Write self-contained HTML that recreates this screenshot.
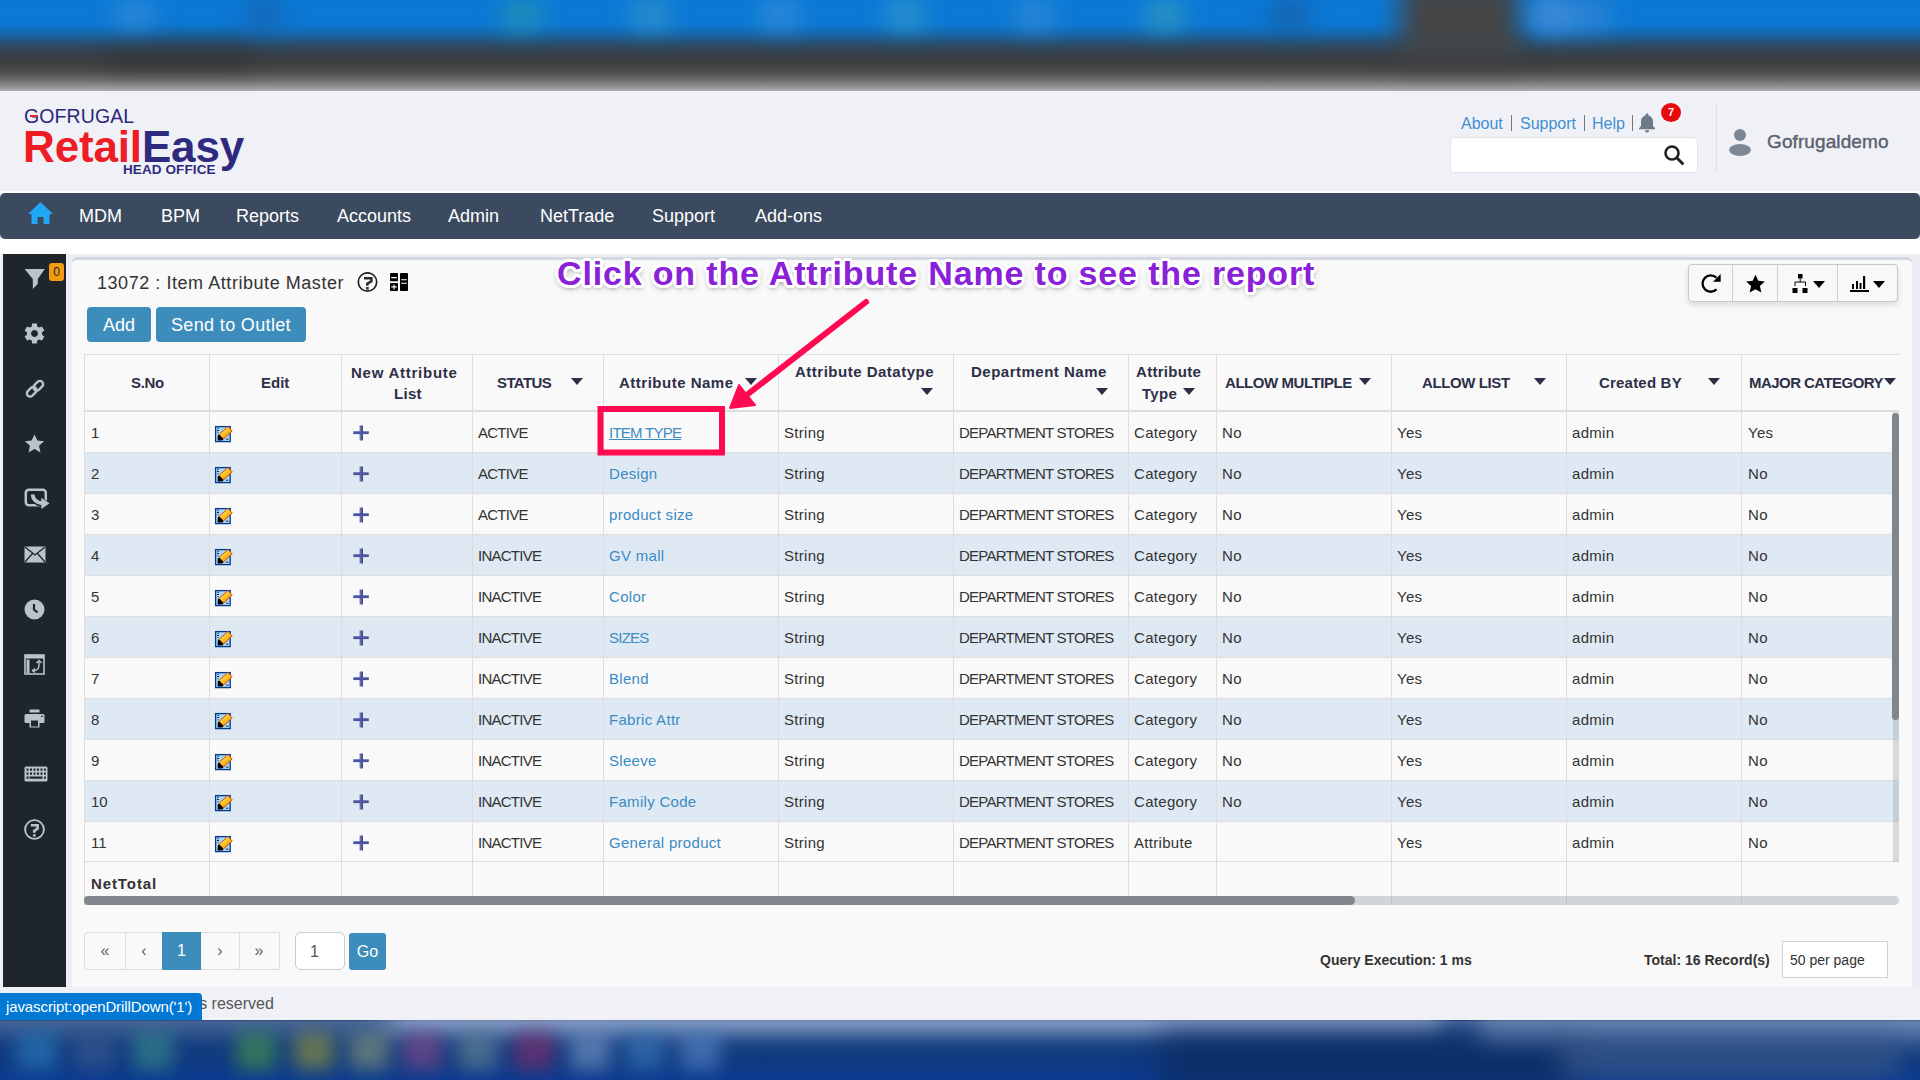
<!DOCTYPE html><html><head><meta charset="utf-8"><title>Item Attribute Master</title><style>
*{box-sizing:border-box}
html,body{margin:0;padding:0}
body{width:1920px;height:1080px;overflow:hidden;position:relative;background:#f0f1f6;font-family:"Liberation Sans",sans-serif;color:#333}
.abs{position:absolute}
#topbar{left:0;top:0;width:1920px;height:91px;overflow:hidden;background:linear-gradient(180deg,#0a79d6 0px,#0b78d4 24px,#1766a8 34px,#2a4d6c 44px,#37404a 54px,#3d3e40 62px,#4a4a4a 71px,#6c6c6c 80px,#9a9a9c 88px,#b0b0b2 91px)}
#taskbar{left:0;top:1020px;width:1920px;height:60px;overflow:hidden;background:linear-gradient(180deg,#2a3e62 0px,#4a6aa0 2px,#2f5590 10px,#173f80 24px,#0f3a80 40px,#0b3a90 60px)}
.nav{left:0;top:193px;width:1920px;height:46px;background:#3b4a5f;border-radius:5px}
.nav span{position:absolute;top:13px;color:#fff;font-size:18px;letter-spacing:0px}
#white{left:0;top:239px;width:1920px;height:15px;background:#fff}
#side{left:3px;top:254px;width:63px;height:733px;background:#1e252b}
#gapl{left:66px;top:254px;width:1854px;height:733px;background:#eceef3}
#panel{left:72px;top:257px;width:1840px;height:730px;background:#f9f9f9;border-top:3px solid #d3d8e0;border-radius:6px 6px 0 0}
#footer{left:0;top:987px;width:1920px;height:33px;background:#f0f1f6}
.btn{background:#3c8dbc;color:#fff;border-radius:4px;font-size:18px;text-align:center;line-height:37px;height:35px;top:307px;overflow:hidden}
.row{left:84px;width:1815px;height:41px;border-bottom:1px solid #dddddd}
.odd{background:#f9f9f9}.even{background:#dee9f3}
.vl{width:1px;background:#dddddd}
.td{position:absolute;font-size:15px;color:#333;white-space:nowrap;line-height:18px}
.up{letter-spacing:-0.75px}
.lo{letter-spacing:0.3px}
.th{position:absolute;font-size:15px;font-weight:bold;color:#2d2f48;white-space:nowrap;line-height:21px}
.lnk{color:#3b8bc4}
.caret{position:absolute;width:0;height:0;border-left:6px solid transparent;border-right:6px solid transparent;border-top:7px solid #2d2f48}
</style></head><body>
<svg width="0" height="0" style="position:absolute"><defs><linearGradient id="pg" x1="0" y1="0" x2="1" y2="1"><stop offset="0" stop-color="#fff7b0"/><stop offset="0.5" stop-color="#fbc21e"/><stop offset="1" stop-color="#e46a10"/></linearGradient></defs><defs><linearGradient id="plg" x1="0" y1="0" x2="1" y2="0"><stop offset="0" stop-color="#7d84c4"/><stop offset="1" stop-color="#363e7c"/></linearGradient></defs></svg>
<div id="topbar" class="abs">
<div class="abs" style="left:1400px;top:-20px;width:120px;height:80px;background:#444;filter:blur(14px)"></div>
<div class="abs" style="left:1540px;top:0;width:70px;height:30px;background:#3d8ad0;filter:blur(12px);opacity:.7"></div>
<div class="abs" style="left:113px;top:-2px;width:44px;height:34px;border-radius:50%;background:#3b8fd6;filter:blur(11px);opacity:.65"></div>
<div class="abs" style="left:243px;top:-2px;width:44px;height:34px;border-radius:50%;background:#1c5fa6;filter:blur(11px);opacity:.65"></div>
<div class="abs" style="left:500px;top:-2px;width:44px;height:34px;border-radius:50%;background:#2a9aa8;filter:blur(11px);opacity:.65"></div>
<div class="abs" style="left:628px;top:-2px;width:44px;height:34px;border-radius:50%;background:#3a98c8;filter:blur(11px);opacity:.65"></div>
<div class="abs" style="left:758px;top:-2px;width:44px;height:34px;border-radius:50%;background:#3d92d8;filter:blur(11px);opacity:.65"></div>
<div class="abs" style="left:883px;top:-2px;width:44px;height:34px;border-radius:50%;background:#3a9cc8;filter:blur(11px);opacity:.65"></div>
<div class="abs" style="left:1013px;top:-2px;width:44px;height:34px;border-radius:50%;background:#3a8fd8;filter:blur(11px);opacity:.65"></div>
<div class="abs" style="left:1143px;top:-2px;width:44px;height:34px;border-radius:50%;background:#3aa0b8;filter:blur(11px);opacity:.65"></div>
<div class="abs" style="left:1268px;top:-2px;width:44px;height:34px;border-radius:50%;background:#1a5a9a;filter:blur(11px);opacity:.65"></div>
<div class="abs" style="left:1528px;top:-2px;width:44px;height:34px;border-radius:50%;background:#4a90d8;filter:blur(11px);opacity:.65"></div>
<div class="abs" style="left:110px;top:45px;width:140px;height:25px;background:#2a2a2a;filter:blur(12px);opacity:.35"></div>
</div>
<div id="hdr" class="abs" style="left:0;top:91px;width:1920px;height:102px;background:#f0f1f6"></div>
<div class="abs" style="left:0;top:191px;width:1920px;height:2px;background:#fff"></div>
<div class="abs" style="left:24px;top:106px;font-size:19.5px;color:#2b2a7a;letter-spacing:0.1px;font-weight:normal;line-height:20px;white-space:nowrap">G<span>OFRUGAL</span></div>
<div class="abs" style="left:30px;top:115px;width:8px;height:2px;background:#e5242a"></div>
<div class="abs" style="left:23px;top:124px;font-size:44px;font-weight:bold;letter-spacing:-0.15px;line-height:46px;white-space:nowrap"><span style="color:#ee1c25">Retail</span><span style="color:#2e2a80">Easy</span></div>
<div class="abs" style="left:122px;top:162px;font-size:13.5px;font-weight:bold;color:#2e2a80;letter-spacing:0.1px;line-height:15px;background:#f0f1f6;padding:0 2px 0 1px">HEAD OFFICE</div>
<div class="abs" style="left:1461px;top:114px;font-size:16px;color:#3f8fd2;line-height:20px;white-space:nowrap">About</div>
<div class="abs" style="left:1511px;top:115px;width:1px;height:16px;background:#777"></div>
<div class="abs" style="left:1520px;top:114px;font-size:16px;color:#3f8fd2;line-height:20px">Support</div>
<div class="abs" style="left:1584px;top:115px;width:1px;height:16px;background:#777"></div>
<div class="abs" style="left:1592px;top:114px;font-size:16px;color:#3f8fd2;line-height:20px">Help</div>
<div class="abs" style="left:1632px;top:115px;width:1px;height:16px;background:#777"></div>
<svg class="abs" style="left:1637px;top:112px" width="20" height="22" viewBox="0 0 20 22"><path d="M10 1.5c-.9 0-1.5.6-1.5 1.4v.6C5.6 4.2 4 6.6 4 9.5v4.5l-2 2.2v1h16v-1l-2-2.2V9.5c0-2.9-1.6-5.3-4.5-6V2.9c0-.8-.6-1.4-1.5-1.4zM7.8 18.3c0 1.2 1 2.2 2.2 2.2s2.2-1 2.2-2.2z" fill="#6c7a89"/></svg>
<div class="abs" style="left:1661px;top:103px;width:20px;height:19px;border-radius:50%;background:#e80a0a;color:#fff;font-size:11px;font-weight:bold;text-align:center;line-height:19px">7</div>
<div class="abs" style="left:1450px;top:137px;width:248px;height:36px;background:#fff;border:1px solid #e2e4ea;border-radius:4px"></div>
<svg class="abs" style="left:1663px;top:144px" width="22" height="22" viewBox="0 0 22 22"><circle cx="9" cy="9" r="6.5" fill="none" stroke="#222" stroke-width="2.6"/><line x1="13.8" y1="13.8" x2="19.5" y2="19.5" stroke="#222" stroke-width="3" stroke-linecap="round"/></svg>
<div class="abs" style="left:1716px;top:103px;width:1px;height:70px;background:#dde0e6"></div>
<svg class="abs" style="left:1728px;top:127px" width="26" height="30" viewBox="0 0 26 30"><circle cx="12" cy="8" r="6" fill="#7d8896"/><ellipse cx="12" cy="23" rx="11" ry="6" fill="#7d8896"/></svg>
<div class="abs" style="left:1767px;top:131px;font-size:19px;color:#59616e;line-height:22px;white-space:nowrap;font-weight:normal;-webkit-text-stroke:0.4px #59616e;letter-spacing:0.1px">Gofrugaldemo</div>
<div class="abs nav">
<svg class="abs" style="left:27px;top:8px" width="27" height="24" viewBox="0 0 27 24"><path d="M13.5 1 L26 13 L22.5 13 L22.5 23 L16.5 23 L16.5 16 L10.5 16 L10.5 23 L4.5 23 L4.5 13 L1 13 Z" fill="#22a7f5"/></svg>
<span style="left:79px">MDM</span>
<span style="left:161px">BPM</span>
<span style="left:236px">Reports</span>
<span style="left:337px">Accounts</span>
<span style="left:448px">Admin</span>
<span style="left:540px">NetTrade</span>
<span style="left:652px">Support</span>
<span style="left:755px">Add-ons</span>
</div>
<div id="white" class="abs"></div>
<div id="gapl" class="abs"></div>
<div id="side" class="abs"></div>
<div id="panel" class="abs"></div>
<svg class="abs" style="left:24px;top:268px" width="22" height="22" viewBox="0 0 22 22"><path d="M0.6 1 H20.8 L13.8 11 V16 L8.8 21 V11 Z" fill="#b8c4cc"/></svg>
<div class="abs" style="left:49px;top:263px;width:15px;height:18px;background:#f39c12;border-radius:3px;color:#222;font-size:12px;text-align:center;line-height:18px">0</div>
<svg class="abs" style="left:24px;top:323px" width="21" height="21" viewBox="0 0 21 21"><path fill-rule="evenodd" fill="#b8c4cc" d="M7.78 3.40 L8.10 0.48 L12.90 0.48 L13.22 3.40 L15.28 4.59 L17.97 3.41 L20.38 7.57 L18.01 9.31 L18.01 11.69 L20.38 13.43 L17.97 17.59 L15.28 16.41 L13.22 17.60 L12.90 20.52 L8.10 20.52 L7.78 17.60 L5.72 16.41 L3.03 17.59 L0.62 13.43 L2.99 11.69 L2.99 9.31 L0.62 7.57 L3.03 3.41 L5.72 4.59 Z M10.5 7 a3.5 3.5 0 1 0 0.01 0 Z"/></svg>
<svg class="abs" style="left:24px;top:378px" width="22" height="22" viewBox="0 0 22 22"><g fill="none" stroke="#b8c4cc" stroke-width="2.4" stroke-linecap="round"><rect x="2.2" y="10.5" width="11" height="6.5" rx="3.25" transform="rotate(-45 7.7 13.75)"/><rect x="8.8" y="4.5" width="11" height="6.5" rx="3.25" transform="rotate(-45 14.3 7.75)"/></g></svg>
<svg class="abs" style="left:24px;top:434px" width="21" height="20" viewBox="0 0 24 23"><path fill="#b8c4cc" d="M12 0.5l3.3 7 7.7.8-5.8 5.2 1.7 7.7L12 17.3l-6.9 3.9 1.7-7.7L1 8.3l7.7-.8z"/></svg>
<svg class="abs" style="left:24px;top:488px" width="27" height="22" viewBox="0 0 27 22"><rect x="1.8" y="1.8" width="20" height="15.5" rx="3" fill="none" stroke="#b8c4cc" stroke-width="2.5"/><path d="M8.5 6.5 Q9.5 14.5 18.5 15.3" fill="none" stroke="#1e252b" stroke-width="6.5"/><path d="M16.3 8.8 L27 15.2 L16.3 22 Z" fill="#1e252b"/><path d="M8.5 6.5 Q9.5 14.5 18.5 15.3" fill="none" stroke="#b8c4cc" stroke-width="3.8"/><path d="M17.3 9.8 L25.6 15.2 L17.3 20.9 Z" fill="#b8c4cc"/></svg>
<svg class="abs" style="left:24px;top:546px" width="22" height="17" viewBox="0 0 22 17"><rect x="0.5" y="0.5" width="21" height="16" fill="#b8c4cc"/><path d="M1 1 L11 9 L21 1 M1 16 L8.5 7.5 M21 16 L13.5 7.5" fill="none" stroke="#1e252b" stroke-width="1.3"/></svg>
<svg class="abs" style="left:24px;top:599px" width="21" height="21" viewBox="0 0 21 21"><circle cx="10.5" cy="10.5" r="10" fill="#b8c4cc"/><path d="M10 5 V10.5 L13.5 13.5" fill="none" stroke="#1e252b" stroke-width="2.2"/></svg>
<svg class="abs" style="left:24px;top:654px" width="21" height="21" viewBox="0 0 21 21"><rect x="1" y="1" width="19" height="19" fill="none" stroke="#b8c4cc" stroke-width="1.6"/><rect x="1" y="1" width="19" height="3.5" fill="#b8c4cc"/><rect x="2.5" y="5.5" width="3" height="13.5" fill="#b8c4cc"/><path d="M8.5 16.5 H10.5 C14 16.5 15 14 15 10 V8" fill="none" stroke="#b8c4cc" stroke-width="1.4"/><path d="M12.5 9 L15 6.5 L17.5 9 M11 14.5 L8.5 16.5 L11 18.5" fill="none" stroke="#b8c4cc" stroke-width="1.4"/></svg>
<svg class="abs" style="left:24px;top:709px" width="21" height="19" viewBox="0 0 21 19"><rect x="5.5" y="0.5" width="10" height="3" fill="#b8c4cc"/><rect x="0.5" y="5" width="20" height="9" rx="1.5" fill="#b8c4cc"/><circle cx="18" cy="7.3" r="0.9" fill="#1e252b"/><rect x="5.5" y="10.5" width="10" height="8" fill="#b8c4cc"/><rect x="7" y="11.5" width="7" height="6" fill="#1e252b"/></svg>
<svg class="abs" style="left:24px;top:766px" width="24" height="16" viewBox="0 0 24 16"><rect x="0.5" y="0.5" width="23" height="15" rx="1.5" fill="#b8c4cc"/><g fill="#1e252b"><rect x="2.5" y="2.5" width="2" height="2.2"/><rect x="6" y="2.5" width="2" height="2.2"/><rect x="9.5" y="2.5" width="2" height="2.2"/><rect x="13" y="2.5" width="2" height="2.2"/><rect x="16.5" y="2.5" width="2" height="2.2"/><rect x="20" y="2.5" width="1.8" height="2.2"/><rect x="2.5" y="6.5" width="2" height="2.2"/><rect x="6" y="6.5" width="2" height="2.2"/><rect x="9.5" y="6.5" width="2" height="2.2"/><rect x="13" y="6.5" width="2" height="2.2"/><rect x="16.5" y="6.5" width="2" height="2.2"/><rect x="20" y="6.5" width="1.8" height="2.2"/><rect x="2.5" y="10.5" width="2" height="2.2"/><rect x="5.5" y="10.5" width="13" height="2.2"/><rect x="20" y="10.5" width="1.8" height="2.2"/></g></svg>
<svg class="abs" style="left:24px;top:819px" width="21" height="21" viewBox="0 0 21 21"><circle cx="10.5" cy="10.5" r="9.4" fill="none" stroke="#b8c4cc" stroke-width="1.9"/><path d="M6.8 6.2 H13.6 V9.6 L10.2 12 V13.8" fill="none" stroke="#b8c4cc" stroke-width="2.6" stroke-linejoin="miter"/><rect x="9" y="15.2" width="2.6" height="2.4" fill="#b8c4cc"/></svg>
<div class="abs" style="left:97px;top:271px;font-size:18px;color:#333;line-height:24px;white-space:nowrap;letter-spacing:0.55px">13072 : Item Attribute Master</div>
<svg class="abs" style="left:357px;top:272px" width="21" height="21" viewBox="0 0 21 21"><circle cx="10.5" cy="10" r="9.2" fill="none" stroke="#222" stroke-width="1.7"/><path d="M7 6.2 H14.4 V9.3 L10.3 11.8 V13.8" fill="none" stroke="#2a2a2a" stroke-width="2.5"/><rect x="9.1" y="15" width="2.6" height="2.6" fill="#2a2a2a"/></svg>
<svg class="abs" style="left:390px;top:273px" width="18" height="18" viewBox="0 0 18 18"><rect x="0" y="0" width="8" height="8.3" rx="0.8" fill="#000"/><rect x="10" y="0" width="8" height="18" rx="0.8" fill="#000"/><rect x="0" y="10" width="8" height="8" rx="0.8" fill="#000"/><path d="M1.3 4.6H6.7 M11.3 14.6 M11.2 6.8H16.8 M11.2 10.3H16.8 M1.3 13.9H6.7 M4 11.4V16.5" stroke="#fff" stroke-width="1.1"/></svg>
<div class="abs btn" style="left:87px;width:64px">Add</div>
<div class="abs btn" style="left:156px;width:150px;letter-spacing:0.35px">Send to Outlet</div>
<div class="abs" style="left:1688px;top:264px;width:210px;height:38px;border:1px solid #c8c8c8;border-radius:4px;background:#f8f8f8;box-shadow:0 3px 6px rgba(0,0,0,.12)"></div>
<div class="abs" style="left:1732px;top:265px;width:1px;height:36px;background:#cfcfcf"></div>
<div class="abs" style="left:1777px;top:265px;width:1px;height:36px;background:#cfcfcf"></div>
<div class="abs" style="left:1837px;top:265px;width:1px;height:36px;background:#cfcfcf"></div>
<svg class="abs" style="left:1700px;top:273px" width="22" height="21" viewBox="0 0 22 21"><path d="M16.5 16.4 A8.2 8.2 0 1 1 16.4 4.6" fill="none" stroke="#000" stroke-width="2.3"/><path d="M13 8.8 L20.7 1.0 L20.7 8.8 Z" fill="#000"/></svg>
<svg class="abs" style="left:1745px;top:274px" width="21" height="20" viewBox="0 0 24 23"><path fill="#000" d="M12 1l3.2 6.9 7.5.8-5.6 5.1 1.6 7.4L12 17.4l-6.7 3.8 1.6-7.4L1.3 8.7l7.5-.8z"/></svg>
<svg class="abs" style="left:1792px;top:274px" width="16" height="20" viewBox="0 0 16 20"><rect x="6" y="0" width="4.5" height="4.5" fill="#000"/><path d="M8.2 4.5V8 M3 12V8H13.5V12" fill="none" stroke="#000" stroke-width="1"/><rect x="0.5" y="14" width="5" height="5" fill="#000"/><rect x="10.5" y="14" width="5" height="5" fill="#000"/></svg>
<div class="abs caret" style="left:1813px;top:281px;border-left-width:6px;border-right-width:6px;border-top:7px solid #000"></div>
<svg class="abs" style="left:1850px;top:275px" width="20" height="18" viewBox="0 0 20 18"><rect x="2" y="9" width="2" height="5" fill="#000"/><rect x="6" y="6" width="2" height="8" fill="#000"/><rect x="9.5" y="8" width="2" height="6" fill="#000"/><rect x="13" y="1" width="2.2" height="13" fill="#000"/><rect x="0" y="15" width="19" height="2" fill="#000"/></svg>
<div class="abs caret" style="left:1873px;top:281px;border-top:7px solid #000"></div>
<div class="abs" style="left:84px;top:354px;width:1815px;height:57px;background:#f9f9f9;border-top:1px solid #dddddd"></div>
<div class="abs" style="left:84px;top:410px;width:1815px;height:2px;background:#dcdcdc"></div>
<div class="abs row odd" style="top:412px;height:41px"></div>
<div class="abs row even" style="top:453px;height:41px"></div>
<div class="abs row odd" style="top:494px;height:41px"></div>
<div class="abs row even" style="top:535px;height:41px"></div>
<div class="abs row odd" style="top:576px;height:41px"></div>
<div class="abs row even" style="top:617px;height:41px"></div>
<div class="abs row odd" style="top:658px;height:41px"></div>
<div class="abs row even" style="top:699px;height:41px"></div>
<div class="abs row odd" style="top:740px;height:41px"></div>
<div class="abs row even" style="top:781px;height:41px"></div>
<div class="abs row odd" style="top:822px;height:40px"></div>
<div class="abs" style="left:84px;top:862px;width:1815px;height:43px;background:#f9f9f9"></div>
<div class="abs vl" style="left:84px;top:354px;height:551px"></div>
<div class="abs vl" style="left:209px;top:354px;height:551px"></div>
<div class="abs vl" style="left:341px;top:354px;height:551px"></div>
<div class="abs vl" style="left:472px;top:354px;height:551px"></div>
<div class="abs vl" style="left:603px;top:354px;height:551px"></div>
<div class="abs vl" style="left:778px;top:354px;height:551px"></div>
<div class="abs vl" style="left:953px;top:354px;height:551px"></div>
<div class="abs vl" style="left:1128px;top:354px;height:551px"></div>
<div class="abs vl" style="left:1216px;top:354px;height:551px"></div>
<div class="abs vl" style="left:1391px;top:354px;height:551px"></div>
<div class="abs vl" style="left:1566px;top:354px;height:551px"></div>
<div class="abs vl" style="left:1741px;top:354px;height:551px"></div>
<div class="th" style="left:131px;top:372px;letter-spacing:-0.3px">S.No</div>
<div class="th" style="left:261px;top:372px;">Edit</div>
<div class="th" style="left:351px;top:362px;letter-spacing:0.75px">New Attribute</div>
<div class="th" style="left:394px;top:383px;letter-spacing:0.3px">List</div>
<div class="th" style="left:497px;top:372px;letter-spacing:-0.6px">STATUS</div>
<div class="caret" style="left:571px;top:378px"></div>
<div class="th" style="left:619px;top:372px;letter-spacing:0.5px">Attribute Name</div>
<div class="caret" style="left:745px;top:378px"></div>
<div class="th" style="left:795px;top:361px;letter-spacing:0.5px">Attribute Datatype</div>
<div class="caret" style="left:921px;top:388px"></div>
<div class="th" style="left:971px;top:361px;letter-spacing:0.5px">Department Name</div>
<div class="caret" style="left:1096px;top:388px"></div>
<div class="th" style="left:1136px;top:361px;letter-spacing:0.3px">Attribute</div>
<div class="th" style="left:1142px;top:383px;letter-spacing:0.3px">Type</div>
<div class="caret" style="left:1183px;top:388px"></div>
<div class="th" style="left:1225px;top:372px;letter-spacing:-0.45px">ALLOW MULTIPLE</div>
<div class="caret" style="left:1359px;top:378px"></div>
<div class="th" style="left:1422px;top:372px;letter-spacing:-0.4px">ALLOW LIST</div>
<div class="caret" style="left:1534px;top:378px"></div>
<div class="th" style="left:1599px;top:372px;letter-spacing:0.2px">Created BY</div>
<div class="caret" style="left:1708px;top:378px"></div>
<div class="th" style="left:1749px;top:372px;letter-spacing:-0.55px">MAJOR CATEGORY</div>
<div class="caret" style="left:1884px;top:378px"></div>
<div class="td" style="left:91px;top:424px">1</div>
<div class="abs" style="left:214px;top:425px;width:19px;height:18px"><svg width="19" height="18" viewBox="0 0 19 18"><rect x="1.6" y="1.6" width="14.6" height="15" fill="#a9d6f5" stroke="#013a8c" stroke-width="1.3"/><path d="M3.5 3.3h1.5M3 5.5h2M3.5 7.8h1" stroke="#123" stroke-width="1.1"/><path d="M5 9.4 L13.9 1.6 L18.2 5.9 L9.5 14 Z" fill="url(#pg)" stroke="#d24a12" stroke-width="1"/><path d="M3.6 15.6 L3.8 10.6 L5 9.4 L9.5 14 L8.4 15.4 Z" fill="#000"/><rect x="12" y="13.5" width="2.5" height="1.5" fill="#4a6a8a"/></svg></div>
<div class="abs" style="left:353px;top:425px;width:17px;height:17px"><svg width="17" height="17" viewBox="0 0 17 17"><rect x="6.5" y="0.5" width="3.5" height="15" fill="url(#plg)"/><rect x="0.3" y="6.3" width="15.5" height="2.8" fill="#4c54a0"/></svg></div>
<div class="td up" style="left:478px;top:424px">ACTIVE</div>
<div class="td lnk up" style="left:609px;top:424px;text-decoration:underline">ITEM TYPE</div>
<div class="td lo" style="left:784px;top:424px">String</div>
<div class="td up" style="left:959px;top:424px">DEPARTMENT STORES</div>
<div class="td lo" style="left:1134px;top:424px">Category</div>
<div class="td lo" style="left:1222px;top:424px">No</div>
<div class="td lo" style="left:1397px;top:424px">Yes</div>
<div class="td lo" style="left:1572px;top:424px">admin</div>
<div class="td lo" style="left:1748px;top:424px">Yes</div>
<div class="td" style="left:91px;top:465px">2</div>
<div class="abs" style="left:214px;top:466px;width:19px;height:18px"><svg width="19" height="18" viewBox="0 0 19 18"><rect x="1.6" y="1.6" width="14.6" height="15" fill="#a9d6f5" stroke="#013a8c" stroke-width="1.3"/><path d="M3.5 3.3h1.5M3 5.5h2M3.5 7.8h1" stroke="#123" stroke-width="1.1"/><path d="M5 9.4 L13.9 1.6 L18.2 5.9 L9.5 14 Z" fill="url(#pg)" stroke="#d24a12" stroke-width="1"/><path d="M3.6 15.6 L3.8 10.6 L5 9.4 L9.5 14 L8.4 15.4 Z" fill="#000"/><rect x="12" y="13.5" width="2.5" height="1.5" fill="#4a6a8a"/></svg></div>
<div class="abs" style="left:353px;top:466px;width:17px;height:17px"><svg width="17" height="17" viewBox="0 0 17 17"><rect x="6.5" y="0.5" width="3.5" height="15" fill="url(#plg)"/><rect x="0.3" y="6.3" width="15.5" height="2.8" fill="#4c54a0"/></svg></div>
<div class="td up" style="left:478px;top:465px">ACTIVE</div>
<div class="td lnk lo" style="left:609px;top:465px">Design</div>
<div class="td lo" style="left:784px;top:465px">String</div>
<div class="td up" style="left:959px;top:465px">DEPARTMENT STORES</div>
<div class="td lo" style="left:1134px;top:465px">Category</div>
<div class="td lo" style="left:1222px;top:465px">No</div>
<div class="td lo" style="left:1397px;top:465px">Yes</div>
<div class="td lo" style="left:1572px;top:465px">admin</div>
<div class="td lo" style="left:1748px;top:465px">No</div>
<div class="td" style="left:91px;top:506px">3</div>
<div class="abs" style="left:214px;top:507px;width:19px;height:18px"><svg width="19" height="18" viewBox="0 0 19 18"><rect x="1.6" y="1.6" width="14.6" height="15" fill="#a9d6f5" stroke="#013a8c" stroke-width="1.3"/><path d="M3.5 3.3h1.5M3 5.5h2M3.5 7.8h1" stroke="#123" stroke-width="1.1"/><path d="M5 9.4 L13.9 1.6 L18.2 5.9 L9.5 14 Z" fill="url(#pg)" stroke="#d24a12" stroke-width="1"/><path d="M3.6 15.6 L3.8 10.6 L5 9.4 L9.5 14 L8.4 15.4 Z" fill="#000"/><rect x="12" y="13.5" width="2.5" height="1.5" fill="#4a6a8a"/></svg></div>
<div class="abs" style="left:353px;top:507px;width:17px;height:17px"><svg width="17" height="17" viewBox="0 0 17 17"><rect x="6.5" y="0.5" width="3.5" height="15" fill="url(#plg)"/><rect x="0.3" y="6.3" width="15.5" height="2.8" fill="#4c54a0"/></svg></div>
<div class="td up" style="left:478px;top:506px">ACTIVE</div>
<div class="td lnk lo" style="left:609px;top:506px">product size</div>
<div class="td lo" style="left:784px;top:506px">String</div>
<div class="td up" style="left:959px;top:506px">DEPARTMENT STORES</div>
<div class="td lo" style="left:1134px;top:506px">Category</div>
<div class="td lo" style="left:1222px;top:506px">No</div>
<div class="td lo" style="left:1397px;top:506px">Yes</div>
<div class="td lo" style="left:1572px;top:506px">admin</div>
<div class="td lo" style="left:1748px;top:506px">No</div>
<div class="td" style="left:91px;top:547px">4</div>
<div class="abs" style="left:214px;top:548px;width:19px;height:18px"><svg width="19" height="18" viewBox="0 0 19 18"><rect x="1.6" y="1.6" width="14.6" height="15" fill="#a9d6f5" stroke="#013a8c" stroke-width="1.3"/><path d="M3.5 3.3h1.5M3 5.5h2M3.5 7.8h1" stroke="#123" stroke-width="1.1"/><path d="M5 9.4 L13.9 1.6 L18.2 5.9 L9.5 14 Z" fill="url(#pg)" stroke="#d24a12" stroke-width="1"/><path d="M3.6 15.6 L3.8 10.6 L5 9.4 L9.5 14 L8.4 15.4 Z" fill="#000"/><rect x="12" y="13.5" width="2.5" height="1.5" fill="#4a6a8a"/></svg></div>
<div class="abs" style="left:353px;top:548px;width:17px;height:17px"><svg width="17" height="17" viewBox="0 0 17 17"><rect x="6.5" y="0.5" width="3.5" height="15" fill="url(#plg)"/><rect x="0.3" y="6.3" width="15.5" height="2.8" fill="#4c54a0"/></svg></div>
<div class="td up" style="left:478px;top:547px">INACTIVE</div>
<div class="td lnk lo" style="left:609px;top:547px">GV mall</div>
<div class="td lo" style="left:784px;top:547px">String</div>
<div class="td up" style="left:959px;top:547px">DEPARTMENT STORES</div>
<div class="td lo" style="left:1134px;top:547px">Category</div>
<div class="td lo" style="left:1222px;top:547px">No</div>
<div class="td lo" style="left:1397px;top:547px">Yes</div>
<div class="td lo" style="left:1572px;top:547px">admin</div>
<div class="td lo" style="left:1748px;top:547px">No</div>
<div class="td" style="left:91px;top:588px">5</div>
<div class="abs" style="left:214px;top:589px;width:19px;height:18px"><svg width="19" height="18" viewBox="0 0 19 18"><rect x="1.6" y="1.6" width="14.6" height="15" fill="#a9d6f5" stroke="#013a8c" stroke-width="1.3"/><path d="M3.5 3.3h1.5M3 5.5h2M3.5 7.8h1" stroke="#123" stroke-width="1.1"/><path d="M5 9.4 L13.9 1.6 L18.2 5.9 L9.5 14 Z" fill="url(#pg)" stroke="#d24a12" stroke-width="1"/><path d="M3.6 15.6 L3.8 10.6 L5 9.4 L9.5 14 L8.4 15.4 Z" fill="#000"/><rect x="12" y="13.5" width="2.5" height="1.5" fill="#4a6a8a"/></svg></div>
<div class="abs" style="left:353px;top:589px;width:17px;height:17px"><svg width="17" height="17" viewBox="0 0 17 17"><rect x="6.5" y="0.5" width="3.5" height="15" fill="url(#plg)"/><rect x="0.3" y="6.3" width="15.5" height="2.8" fill="#4c54a0"/></svg></div>
<div class="td up" style="left:478px;top:588px">INACTIVE</div>
<div class="td lnk lo" style="left:609px;top:588px">Color</div>
<div class="td lo" style="left:784px;top:588px">String</div>
<div class="td up" style="left:959px;top:588px">DEPARTMENT STORES</div>
<div class="td lo" style="left:1134px;top:588px">Category</div>
<div class="td lo" style="left:1222px;top:588px">No</div>
<div class="td lo" style="left:1397px;top:588px">Yes</div>
<div class="td lo" style="left:1572px;top:588px">admin</div>
<div class="td lo" style="left:1748px;top:588px">No</div>
<div class="td" style="left:91px;top:629px">6</div>
<div class="abs" style="left:214px;top:630px;width:19px;height:18px"><svg width="19" height="18" viewBox="0 0 19 18"><rect x="1.6" y="1.6" width="14.6" height="15" fill="#a9d6f5" stroke="#013a8c" stroke-width="1.3"/><path d="M3.5 3.3h1.5M3 5.5h2M3.5 7.8h1" stroke="#123" stroke-width="1.1"/><path d="M5 9.4 L13.9 1.6 L18.2 5.9 L9.5 14 Z" fill="url(#pg)" stroke="#d24a12" stroke-width="1"/><path d="M3.6 15.6 L3.8 10.6 L5 9.4 L9.5 14 L8.4 15.4 Z" fill="#000"/><rect x="12" y="13.5" width="2.5" height="1.5" fill="#4a6a8a"/></svg></div>
<div class="abs" style="left:353px;top:630px;width:17px;height:17px"><svg width="17" height="17" viewBox="0 0 17 17"><rect x="6.5" y="0.5" width="3.5" height="15" fill="url(#plg)"/><rect x="0.3" y="6.3" width="15.5" height="2.8" fill="#4c54a0"/></svg></div>
<div class="td up" style="left:478px;top:629px">INACTIVE</div>
<div class="td lnk up" style="left:609px;top:629px">SIZES</div>
<div class="td lo" style="left:784px;top:629px">String</div>
<div class="td up" style="left:959px;top:629px">DEPARTMENT STORES</div>
<div class="td lo" style="left:1134px;top:629px">Category</div>
<div class="td lo" style="left:1222px;top:629px">No</div>
<div class="td lo" style="left:1397px;top:629px">Yes</div>
<div class="td lo" style="left:1572px;top:629px">admin</div>
<div class="td lo" style="left:1748px;top:629px">No</div>
<div class="td" style="left:91px;top:670px">7</div>
<div class="abs" style="left:214px;top:671px;width:19px;height:18px"><svg width="19" height="18" viewBox="0 0 19 18"><rect x="1.6" y="1.6" width="14.6" height="15" fill="#a9d6f5" stroke="#013a8c" stroke-width="1.3"/><path d="M3.5 3.3h1.5M3 5.5h2M3.5 7.8h1" stroke="#123" stroke-width="1.1"/><path d="M5 9.4 L13.9 1.6 L18.2 5.9 L9.5 14 Z" fill="url(#pg)" stroke="#d24a12" stroke-width="1"/><path d="M3.6 15.6 L3.8 10.6 L5 9.4 L9.5 14 L8.4 15.4 Z" fill="#000"/><rect x="12" y="13.5" width="2.5" height="1.5" fill="#4a6a8a"/></svg></div>
<div class="abs" style="left:353px;top:671px;width:17px;height:17px"><svg width="17" height="17" viewBox="0 0 17 17"><rect x="6.5" y="0.5" width="3.5" height="15" fill="url(#plg)"/><rect x="0.3" y="6.3" width="15.5" height="2.8" fill="#4c54a0"/></svg></div>
<div class="td up" style="left:478px;top:670px">INACTIVE</div>
<div class="td lnk lo" style="left:609px;top:670px">Blend</div>
<div class="td lo" style="left:784px;top:670px">String</div>
<div class="td up" style="left:959px;top:670px">DEPARTMENT STORES</div>
<div class="td lo" style="left:1134px;top:670px">Category</div>
<div class="td lo" style="left:1222px;top:670px">No</div>
<div class="td lo" style="left:1397px;top:670px">Yes</div>
<div class="td lo" style="left:1572px;top:670px">admin</div>
<div class="td lo" style="left:1748px;top:670px">No</div>
<div class="td" style="left:91px;top:711px">8</div>
<div class="abs" style="left:214px;top:712px;width:19px;height:18px"><svg width="19" height="18" viewBox="0 0 19 18"><rect x="1.6" y="1.6" width="14.6" height="15" fill="#a9d6f5" stroke="#013a8c" stroke-width="1.3"/><path d="M3.5 3.3h1.5M3 5.5h2M3.5 7.8h1" stroke="#123" stroke-width="1.1"/><path d="M5 9.4 L13.9 1.6 L18.2 5.9 L9.5 14 Z" fill="url(#pg)" stroke="#d24a12" stroke-width="1"/><path d="M3.6 15.6 L3.8 10.6 L5 9.4 L9.5 14 L8.4 15.4 Z" fill="#000"/><rect x="12" y="13.5" width="2.5" height="1.5" fill="#4a6a8a"/></svg></div>
<div class="abs" style="left:353px;top:712px;width:17px;height:17px"><svg width="17" height="17" viewBox="0 0 17 17"><rect x="6.5" y="0.5" width="3.5" height="15" fill="url(#plg)"/><rect x="0.3" y="6.3" width="15.5" height="2.8" fill="#4c54a0"/></svg></div>
<div class="td up" style="left:478px;top:711px">INACTIVE</div>
<div class="td lnk lo" style="left:609px;top:711px">Fabric Attr</div>
<div class="td lo" style="left:784px;top:711px">String</div>
<div class="td up" style="left:959px;top:711px">DEPARTMENT STORES</div>
<div class="td lo" style="left:1134px;top:711px">Category</div>
<div class="td lo" style="left:1222px;top:711px">No</div>
<div class="td lo" style="left:1397px;top:711px">Yes</div>
<div class="td lo" style="left:1572px;top:711px">admin</div>
<div class="td lo" style="left:1748px;top:711px">No</div>
<div class="td" style="left:91px;top:752px">9</div>
<div class="abs" style="left:214px;top:753px;width:19px;height:18px"><svg width="19" height="18" viewBox="0 0 19 18"><rect x="1.6" y="1.6" width="14.6" height="15" fill="#a9d6f5" stroke="#013a8c" stroke-width="1.3"/><path d="M3.5 3.3h1.5M3 5.5h2M3.5 7.8h1" stroke="#123" stroke-width="1.1"/><path d="M5 9.4 L13.9 1.6 L18.2 5.9 L9.5 14 Z" fill="url(#pg)" stroke="#d24a12" stroke-width="1"/><path d="M3.6 15.6 L3.8 10.6 L5 9.4 L9.5 14 L8.4 15.4 Z" fill="#000"/><rect x="12" y="13.5" width="2.5" height="1.5" fill="#4a6a8a"/></svg></div>
<div class="abs" style="left:353px;top:753px;width:17px;height:17px"><svg width="17" height="17" viewBox="0 0 17 17"><rect x="6.5" y="0.5" width="3.5" height="15" fill="url(#plg)"/><rect x="0.3" y="6.3" width="15.5" height="2.8" fill="#4c54a0"/></svg></div>
<div class="td up" style="left:478px;top:752px">INACTIVE</div>
<div class="td lnk lo" style="left:609px;top:752px">Sleeve</div>
<div class="td lo" style="left:784px;top:752px">String</div>
<div class="td up" style="left:959px;top:752px">DEPARTMENT STORES</div>
<div class="td lo" style="left:1134px;top:752px">Category</div>
<div class="td lo" style="left:1222px;top:752px">No</div>
<div class="td lo" style="left:1397px;top:752px">Yes</div>
<div class="td lo" style="left:1572px;top:752px">admin</div>
<div class="td lo" style="left:1748px;top:752px">No</div>
<div class="td" style="left:91px;top:793px">10</div>
<div class="abs" style="left:214px;top:794px;width:19px;height:18px"><svg width="19" height="18" viewBox="0 0 19 18"><rect x="1.6" y="1.6" width="14.6" height="15" fill="#a9d6f5" stroke="#013a8c" stroke-width="1.3"/><path d="M3.5 3.3h1.5M3 5.5h2M3.5 7.8h1" stroke="#123" stroke-width="1.1"/><path d="M5 9.4 L13.9 1.6 L18.2 5.9 L9.5 14 Z" fill="url(#pg)" stroke="#d24a12" stroke-width="1"/><path d="M3.6 15.6 L3.8 10.6 L5 9.4 L9.5 14 L8.4 15.4 Z" fill="#000"/><rect x="12" y="13.5" width="2.5" height="1.5" fill="#4a6a8a"/></svg></div>
<div class="abs" style="left:353px;top:794px;width:17px;height:17px"><svg width="17" height="17" viewBox="0 0 17 17"><rect x="6.5" y="0.5" width="3.5" height="15" fill="url(#plg)"/><rect x="0.3" y="6.3" width="15.5" height="2.8" fill="#4c54a0"/></svg></div>
<div class="td up" style="left:478px;top:793px">INACTIVE</div>
<div class="td lnk lo" style="left:609px;top:793px">Family Code</div>
<div class="td lo" style="left:784px;top:793px">String</div>
<div class="td up" style="left:959px;top:793px">DEPARTMENT STORES</div>
<div class="td lo" style="left:1134px;top:793px">Category</div>
<div class="td lo" style="left:1222px;top:793px">No</div>
<div class="td lo" style="left:1397px;top:793px">Yes</div>
<div class="td lo" style="left:1572px;top:793px">admin</div>
<div class="td lo" style="left:1748px;top:793px">No</div>
<div class="td" style="left:91px;top:834px">11</div>
<div class="abs" style="left:214px;top:835px;width:19px;height:18px"><svg width="19" height="18" viewBox="0 0 19 18"><rect x="1.6" y="1.6" width="14.6" height="15" fill="#a9d6f5" stroke="#013a8c" stroke-width="1.3"/><path d="M3.5 3.3h1.5M3 5.5h2M3.5 7.8h1" stroke="#123" stroke-width="1.1"/><path d="M5 9.4 L13.9 1.6 L18.2 5.9 L9.5 14 Z" fill="url(#pg)" stroke="#d24a12" stroke-width="1"/><path d="M3.6 15.6 L3.8 10.6 L5 9.4 L9.5 14 L8.4 15.4 Z" fill="#000"/><rect x="12" y="13.5" width="2.5" height="1.5" fill="#4a6a8a"/></svg></div>
<div class="abs" style="left:353px;top:835px;width:17px;height:17px"><svg width="17" height="17" viewBox="0 0 17 17"><rect x="6.5" y="0.5" width="3.5" height="15" fill="url(#plg)"/><rect x="0.3" y="6.3" width="15.5" height="2.8" fill="#4c54a0"/></svg></div>
<div class="td up" style="left:478px;top:834px">INACTIVE</div>
<div class="td lnk lo" style="left:609px;top:834px">General product</div>
<div class="td lo" style="left:784px;top:834px">String</div>
<div class="td up" style="left:959px;top:834px">DEPARTMENT STORES</div>
<div class="td lo" style="left:1134px;top:834px">Attribute</div>
<div class="td lo" style="left:1397px;top:834px">Yes</div>
<div class="td lo" style="left:1572px;top:834px">admin</div>
<div class="td lo" style="left:1748px;top:834px">No</div>
<div class="th" style="left:91px;top:873px;color:#333;letter-spacing:0.9px">NetTotal</div>
<div class="abs" style="left:1893px;top:412px;width:6px;height:450px;background:rgba(150,160,170,.35)"></div>
<div class="abs" style="left:1892px;top:413px;width:7px;height:307px;border-radius:4px;background:#80868b"></div>
<div class="abs" style="left:84px;top:896px;width:1815px;height:9px;background:rgba(150,160,170,.4);border-radius:0 5px 5px 0"></div>
<div class="abs" style="left:84px;top:896px;width:1271px;height:9px;border-radius:5px;background:#80868b"></div>
<div class="abs" style="left:84px;top:932px;width:196px;height:38px;border:1px solid #dcdcdc;border-radius:4px 0 0 4px;background:#f9f9f9"></div>
<div class="abs" style="left:125px;top:932px;width:1px;height:38px;background:#dcdcdc"></div>
<div class="abs" style="left:239px;top:932px;width:1px;height:38px;background:#dcdcdc"></div>
<div class="abs" style="left:162px;top:932px;width:39px;height:38px;background:#3c8dbc"></div>
<div class="abs" style="left:85px;top:940px;width:40px;text-align:center;font-size:16px;color:#6b6055;line-height:22px">&laquo;</div>
<div class="abs" style="left:124px;top:940px;width:40px;text-align:center;font-size:16px;color:#6b6055;line-height:22px">&lsaquo;</div>
<div class="abs" style="left:161.5px;top:940px;width:40px;text-align:center;font-size:16px;color:#fff;line-height:22px">1</div>
<div class="abs" style="left:200px;top:940px;width:40px;text-align:center;font-size:16px;color:#6b6055;line-height:22px">&rsaquo;</div>
<div class="abs" style="left:239px;top:940px;width:40px;text-align:center;font-size:16px;color:#6b6055;line-height:22px">&raquo;</div>
<div class="abs" style="left:295px;top:932px;width:50px;height:38px;border:1px solid #ccc;border-radius:6px;background:#fff;font-size:16px;color:#555;line-height:38px;padding-left:14px">1</div>
<div class="abs" style="left:349px;top:933px;width:37px;height:37px;border-radius:3px;background:#3c8dbc;color:#fff;font-size:16px;text-align:center;line-height:37px">Go</div>
<div class="abs" style="left:1320px;top:952px;font-size:14px;font-weight:bold;color:#333;white-space:nowrap;line-height:17px;letter-spacing:0px">Query Execution: 1 ms</div>
<div class="abs" style="left:1644px;top:952px;font-size:14px;font-weight:bold;color:#333;white-space:nowrap;line-height:17px">Total: 16 Record(s)</div>
<div class="abs" style="left:1782px;top:941px;width:106px;height:37px;border:1px solid #d4d4d4;background:#fff;font-size:14px;color:#333;line-height:37px;padding-left:7px;white-space:nowrap">50 per page</div>
<div id="footer" class="abs"></div>
<div class="abs" style="left:168px;top:994px;font-size:16px;color:#555;line-height:20px;white-space:nowrap">rights reserved</div>
<div class="abs" style="left:0;top:993px;width:202px;height:27px;background:#0078d4;border-radius:0 4px 0 0;color:#fff;font-size:15px;line-height:27px;padding-left:6px;white-space:nowrap;letter-spacing:-0.1px">javascript:openDrillDown('1')</div>
<div id="taskbar" class="abs">
<div class="abs" style="left:380px;top:-14px;width:1060px;height:26px;background:#9db0d4;filter:blur(10px);opacity:.75"></div>
<div class="abs" style="left:-40px;top:-14px;width:440px;height:24px;background:#3c5a8c;filter:blur(10px);opacity:.6"></div>
<div class="abs" style="left:1160px;top:14px;width:420px;height:60px;background:#0c2c62;filter:blur(16px);opacity:.8"></div>
<div class="abs" style="left:1480px;top:-10px;width:460px;height:30px;background:#8aa0c8;filter:blur(12px);opacity:.55"></div>
<div class="abs" style="left:1560px;top:18px;width:340px;height:40px;background:#3c5a88;filter:blur(14px);opacity:.7"></div>
<div class="abs" style="left:17px;top:12px;width:40px;height:38px;background:#2a7fc0;filter:blur(9px);opacity:.6"></div>
<div class="abs" style="left:74px;top:12px;width:40px;height:38px;background:#3a5a90;filter:blur(9px);opacity:.6"></div>
<div class="abs" style="left:133px;top:12px;width:40px;height:38px;background:#3a9090;filter:blur(9px);opacity:.6"></div>
<div class="abs" style="left:236px;top:12px;width:40px;height:38px;background:#4a9a4a;filter:blur(9px);opacity:.6"></div>
<div class="abs" style="left:294px;top:12px;width:40px;height:38px;background:#9a9a3a;filter:blur(9px);opacity:.6"></div>
<div class="abs" style="left:349px;top:12px;width:40px;height:38px;background:#8a9a7a;filter:blur(9px);opacity:.6"></div>
<div class="abs" style="left:402px;top:12px;width:40px;height:38px;background:#8a4a8a;filter:blur(9px);opacity:.6"></div>
<div class="abs" style="left:458px;top:12px;width:40px;height:38px;background:#6a8a9a;filter:blur(9px);opacity:.6"></div>
<div class="abs" style="left:514px;top:12px;width:40px;height:38px;background:#8a2a6a;filter:blur(9px);opacity:.6"></div>
<div class="abs" style="left:570px;top:12px;width:40px;height:38px;background:#7a9aca;filter:blur(9px);opacity:.6"></div>
<div class="abs" style="left:625px;top:12px;width:40px;height:38px;background:#3a7aba;filter:blur(9px);opacity:.6"></div>
<div class="abs" style="left:680px;top:12px;width:40px;height:38px;background:#5a8aca;filter:blur(9px);opacity:.6"></div>
</div>
<div class="abs" style="left:557px;top:253px;font-size:34px;font-weight:bold;color:#8a20d8;white-space:nowrap;line-height:40px;letter-spacing:0.84px;text-shadow:3.00px 0.00px 0 #fff,2.77px 1.15px 0 #fff,2.12px 2.12px 0 #fff,1.15px 2.77px 0 #fff,0.00px 3.00px 0 #fff,-1.15px 2.77px 0 #fff,-2.12px 2.12px 0 #fff,-2.77px 1.15px 0 #fff,-3.00px 0.00px 0 #fff,-2.77px -1.15px 0 #fff,-2.12px -2.12px 0 #fff,-1.15px -2.77px 0 #fff,-0.00px -3.00px 0 #fff,1.15px -2.77px 0 #fff,2.12px -2.12px 0 #fff,2.77px -1.15px 0 #fff,0 2px 5px rgba(0,0,0,.45),1px 3px 7px rgba(0,0,0,.3)">Click on the Attribute Name to see the report</div>
<svg class="abs" style="left:0;top:0" width="1920" height="1080" viewBox="0 0 1920 1080"><rect x="600.5" y="409" width="121.5" height="43.5" fill="none" stroke="#ff0a50" stroke-width="6"/><line x1="866" y1="302" x2="748" y2="394" stroke="#ff0a50" stroke-width="6" stroke-linecap="round"/><path d="M730 408 L739 385 L755 405 Z" fill="#ff0a50" stroke="#ff0a50" stroke-width="2" stroke-linejoin="round"/></svg>
</body></html>
